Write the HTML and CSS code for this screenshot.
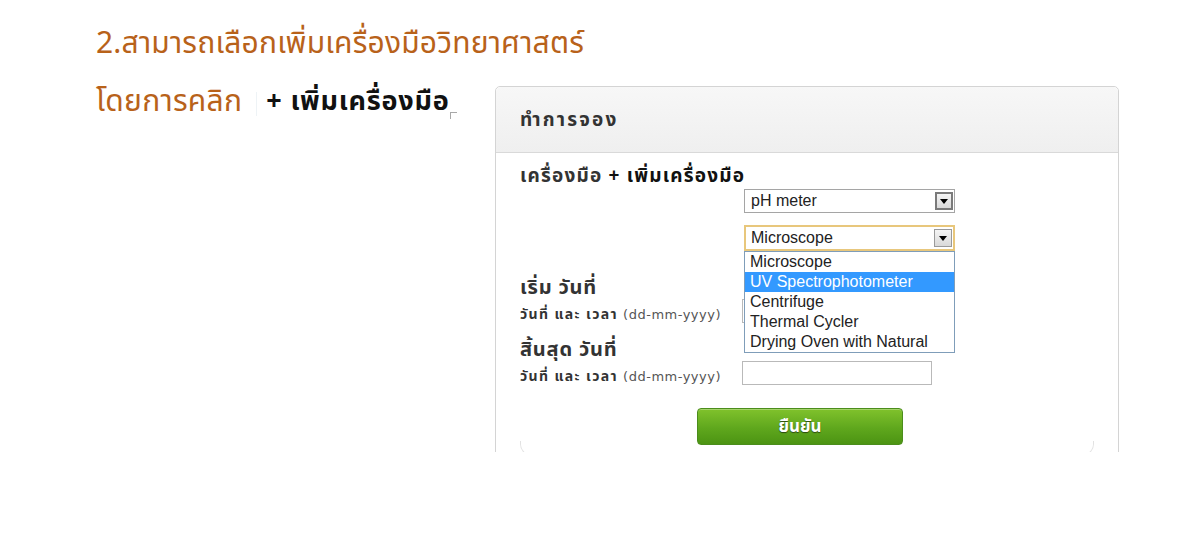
FILE: index.html
```html
<!DOCTYPE html>
<html lang="th">
<head>
<meta charset="utf-8">
<title>ทำการจอง</title>
<link rel="stylesheet" href="styles.css">
</head>
<body>
<div class="page">
  <h1 class="step-title">2.สามารถเลือกเพิ่มเครื่องมือวิทยาศาสตร์</h1>
  <div class="row">
    <div class="intro">
      <span class="intro-text">โดยการคลิก</span>
      <span class="divider"></span>
      <span class="intro-link">+ เพิ่มเครื่องมือ</span>
      <span class="corner"></span>
    </div>
    <div class="panel-clip">
      <div class="panel">
        <div class="panel-head">ทำการจอง</div>
        <div class="panel-body">
          <div class="tools-title"><span class="tools-label">เครื่องมือ</span> <span class="tools-add">+ เพิ่มเครื่องมือ</span></div>
          <div class="field-row">
            <div class="select">
              <span class="select-value">pH meter</span>
              <span class="select-btn dark"><span class="tri"></span></span>
            </div>
          </div>
          <div class="field-row second">
            <div class="select-wrap">
              <div class="select focus">
                <span class="select-value">Microscope</span>
                <span class="select-btn"><span class="tri"></span></span>
              </div>
              <ul class="options">
                <li>Microscope</li>
                <li class="active">UV Spectrophotometer</li>
                <li>Centrifuge</li>
                <li>Thermal Cycler</li>
                <li>Drying Oven with Natural</li>
              </ul>
            </div>
          </div>
          <div class="date-block">
            <div class="date-title">เริ่ม วันที่</div>
            <div class="date-row">
              <span class="date-label">วันที่ และ เวลา <span class="fmt">(dd-mm-yyyy)</span></span>
              <span class="input"></span>
            </div>
          </div>
          <div class="date-block end">
            <div class="date-title">สิ้นสุด วันที่</div>
            <div class="date-row">
              <span class="date-label">วันที่ และ เวลา <span class="fmt">(dd-mm-yyyy)</span></span>
              <span class="input"></span>
            </div>
          </div>
          <div class="actions">
            <button class="confirm" type="button">ยืนยัน</button>
          </div>
          <div class="box-end"></div>
        </div>
      </div>
    </div>
  </div>
</div>
</body>
</html>
```

FILE: styles.css
```css
html, body {
  margin: 0;
  padding: 0;
  background: #ffffff;
}

body {
  width: 1187px;
  height: 544px;
  overflow: hidden;
  font-family: Tahoma, "Noto Sans Thai", "Loma", "Garuda", "Liberation Sans", sans-serif;
}

.page {
  padding: 24px 0 0 96px;
}

.step-title {
  margin: 0;
  font-weight: normal;
  font-size: 30px;
  line-height: 40px;
  color: #b8621a;
  letter-spacing: 0.2px;
}

.row {
  display: flex;
  margin-top: 22px;
}

.intro {
  width: 399px;
  display: flex;
  align-items: flex-start;
  margin-top: -4px;
}

.intro-text {
  font-size: 30px;
  line-height: 40px;
  letter-spacing: 0.3px;
  color: #b8621a;
}

.divider {
  width: 1px;
  height: 24px;
  margin: 10px 9px 0 14px;
  background: #eef3f6;
}

.intro-link {
  font-size: 27px;
  line-height: 40px;
  font-weight: bold;
  letter-spacing: 0.8px;
  color: #111;
}

.corner {
  width: 6px;
  height: 6px;
  margin-top: 30px;
  border-top: 1px solid #a8a8a8;
  border-left: 1px solid #a8a8a8;
}

.panel-clip {
  width: 624px;
  height: 366px;
  overflow: hidden;
}

.panel {
  border: 1px solid #d4d4d4;
  border-radius: 5px;
  height: 420px;
  background: #fff;
}

.panel-head {
  height: 65px;
  line-height: 68px;
  padding-left: 24px;
  font-size: 19px;
  letter-spacing: 2.2px;
  font-weight: bold;
  color: #333;
  background: linear-gradient(#f7f7f7, #efefef);
  border-bottom: 1px solid #d9d9d9;
  border-radius: 5px 5px 0 0;
}

.panel-body {
  padding: 12px 24px 0 24px;
}

.tools-title {
  font-size: 19px;
  line-height: 24px;
  letter-spacing: 1.2px;
  font-weight: bold;
  color: #333;
}

.tools-add {
  color: #111;
}

.field-row {
  padding-left: 224px;
}

.field-row.second {
  margin-top: 12px;
}

.select-wrap {
  position: relative;
  width: 211px;
}

.select {
  width: 211px;
  height: 24px;
  box-sizing: border-box;
  border: 1px solid #a5a5a5;
  display: flex;
  align-items: center;
  justify-content: space-between;
  background: #fff;
  font-family: "Liberation Sans", Arial, sans-serif;
  font-size: 16px;
  color: #222;
}

.select.focus {
  height: 26px;
  border: 2px solid #e8c77c;
}

.select-value {
  padding-left: 6px;
}

.select.focus .select-value {
  padding-left: 5px;
}

.select-btn {
  width: 18px;
  height: 18px;
  margin-right: 1px;
  box-sizing: border-box;
  border: 1px solid #9a9a9a;
  background: linear-gradient(#f4f4f4, #d9d9d9);
  display: flex;
  align-items: center;
  justify-content: center;
}

.select-btn.dark {
  border: 2px solid #7a7a7a;
}

.tri {
  width: 0;
  height: 0;
  border-left: 4px solid transparent;
  border-right: 4px solid transparent;
  border-top: 5px solid #000;
}

.options {
  position: absolute;
  left: 0;
  top: 26px;
  width: 211px;
  box-sizing: border-box;
  margin: 0;
  padding: 0;
  list-style: none;
  border: 1px solid #7f9db9;
  background: #fff;
  font-family: "Liberation Sans", Arial, sans-serif;
  font-size: 16px;
  color: #222;
  z-index: 2;
}

.options li {
  height: 20px;
  line-height: 20px;
  padding-left: 5px;
}

.options li.active {
  background: #3399ff;
  color: #fff;
}

.date-block {
  margin-top: 26px;
}

.date-block.end {
  margin-top: 16px;
}

.date-title {
  font-size: 20px;
  line-height: 22px;
  letter-spacing: 0.8px;
  font-weight: bold;
  color: #333;
}

.date-row {
  display: flex;
  align-items: center;
  height: 24px;
}

.date-label {
  width: 222px;
  padding-top: 6px;
  font-size: 14px;
  letter-spacing: 1.4px;
  font-weight: bold;
  color: #333;
}

.fmt {
  font-weight: normal;
  color: #555;
  font-family: "DejaVu Sans", sans-serif;
  font-size: 13px;
  letter-spacing: 0.5px;
}

.input {
  width: 190px;
  height: 24px;
  box-sizing: border-box;
  border: 1px solid #b9b9b9;
  background: #fff;
}

.actions {
  display: flex;
  justify-content: center;
  margin-top: 23px;
}

.confirm {
  width: 206px;
  height: 37px;
  margin-left: -14px;
  border: 1px solid #4b8d1c;
  border-radius: 4px;
  background: linear-gradient(#80c22c, #5fa71d 55%, #4c9413);
  color: #fff;
  font-family: Tahoma, "Noto Sans Thai", "Loma", "Garuda", "Liberation Sans", sans-serif;
  font-size: 17px;
  font-weight: bold;
  text-shadow: 0 1px 1px #2c4a10;
  box-shadow: inset 0 1px 0 rgba(255,255,255,0.3);
}

.box-end {
  height: 14px;
  margin: -4px 0 0 0;
  border: 1px solid #e2e2e2;
  border-top: none;
  border-radius: 0 0 12px 12px;
}
```
